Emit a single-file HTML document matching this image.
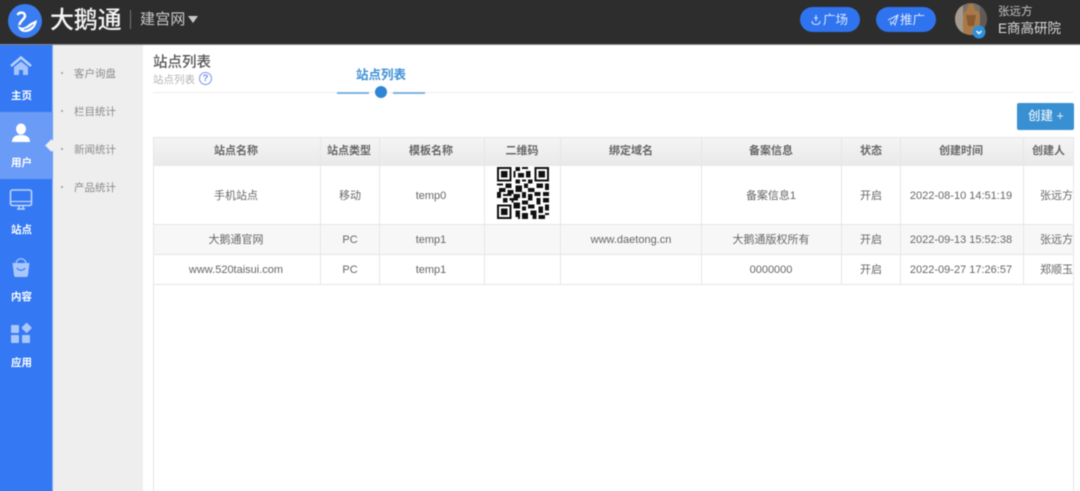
<!DOCTYPE html>
<html lang="zh">
<head>
<meta charset="utf-8">
<style>
html,body{margin:0;padding:0;width:1080px;height:491px;overflow:hidden;background:#fff}
body{font-family:"Liberation Sans","Noto Sans CJK SC",sans-serif;position:relative}
#w{position:absolute;left:0;top:0;width:1080px;height:491px;filter:blur(.5px)}
.a{position:absolute;white-space:nowrap}
.c{position:absolute;white-space:nowrap;text-align:center;transform:translateX(-50%)}
.nav{color:#fff;font-size:10.5px;font-weight:700;line-height:14px;width:43px;left:0;text-align:center;position:absolute}
.sub{position:absolute;left:74px;font-size:10.5px;color:#8a8a8a;line-height:14px}
.dot{position:absolute;left:61px;width:2px;height:2px;background:#999;border-radius:50%}
.h{position:absolute;background:#e6e6e6}
.th{font-size:11px;font-weight:700;color:#666;line-height:14px;top:144px}
.td{font-size:11px;color:#666;line-height:14px}
</style>
</head>
<body>
<div id="w">
<!-- top bar -->
<div class="a" style="left:-6px;top:-6px;width:1092px;height:50px;background:#2d2d2d"></div>
<div class="a" style="left:-6px;top:44px;width:1092px;height:1px;background:#888"></div>
<svg class="a" style="left:8px;top:4px" width="34" height="34" viewBox="0 0 34 34">
<circle cx="17" cy="17" r="17" fill="#3a7df0"/>
<path d="M9.500 11 C11.500 7.500 17 8 17 12 C17 15 11.500 17 11.500 21" stroke="#fff" stroke-width="2.500" fill="none"/>
<path d="M10 21 C12 25 17 24 20 21 C22 19 25 18 29 16 C28 23 24 28 17 28 C13 28 10 25 10 21Z" fill="#fff"/>
<path d="M16 25.500 C20 25 23 23 25.500 20.500" stroke="#3a7df0" stroke-width="1" fill="none"/>
</svg>
<div class="a" style="left:50px;top:5px;font-size:24px;line-height:32px;color:#f4f4f4;font-weight:500;letter-spacing:-.2px">大鹅通</div>
<div class="a" style="left:130px;top:10px;width:1px;height:19px;background:#777"></div>
<div class="a" style="left:140px;top:10px;font-size:15px;line-height:20px;color:#c9c9c9;letter-spacing:.2px">建宫网</div>
<div class="a" style="left:188px;top:16px;width:0;height:0;border-left:5px solid transparent;border-right:5px solid transparent;border-top:7px solid #c9c9c9"></div>

<div class="a" style="left:800px;top:7px;width:60px;height:25px;border-radius:13px;background:#2f74ee"></div>
<svg class="a" style="left:810px;top:14px" width="12" height="12" viewBox="0 0 12 12"><path d="M6 1 V7 M2 7 C2 10 4 10.500 6 10.500 C8 10.500 10 10 10 7 M4 4 H8" stroke="#cfe0ff" stroke-width="1.100" fill="none"/></svg>
<div class="a" style="left:823px;top:12px;font-size:12.500px;line-height:16px;color:#dce8ff">广场</div>
<div class="a" style="left:876px;top:7px;width:60px;height:25px;border-radius:13px;background:#2f74ee"></div>
<svg class="a" style="left:887px;top:14px" width="12" height="12" viewBox="0 0 12 12"><path d="M1 6 L11 1 L8 11 L6 8 L11 1 M6 8 L4 10.500 L3.500 7" stroke="#cfe0ff" stroke-width="1" fill="none"/></svg>
<div class="a" style="left:900px;top:12px;font-size:12.500px;line-height:16px;color:#dce8ff">推广</div>

<svg class="a" style="left:955px;top:2px" width="34" height="38" viewBox="0 0 34 38">
<defs><clipPath id="av"><circle cx="16" cy="17" r="16"/></clipPath></defs>
<circle cx="16" cy="17" r="16" fill="#7a6f64"/>
<g clip-path="url(#av)">
<rect x="0" y="0" width="8" height="34" fill="#a39b92"/>
<rect x="25" y="0" width="8" height="34" fill="#5f5a55"/>
<path d="M13 4 C13 1 19 1 19 4 L20 8 C24 9 25 12 25 16 L24 34 H8 L8 16 C8 12 9 9 12 8Z" fill="#a97a48"/>
<path d="M11 13 H21 L19 24 H13Z" fill="#8a5b30"/>
</g>
<circle cx="24" cy="30" r="6.500" fill="#2f8fdc"/>
<path d="M21.500 29 L24 31.500 L26.500 29" stroke="#fff" stroke-width="1.400" fill="none"/>
</svg>
<div class="a" style="left:998px;top:5px;font-size:11.500px;line-height:15px;color:#c4c4c4">张远方</div>
<div class="a" style="left:998px;top:20px;font-size:13.500px;line-height:18px;color:#d8d8d8">E商高研院</div>

<!-- sub nav -->
<div class="a" style="left:53px;top:45px;width:90px;height:452px;background:#eeeeee"></div>
<div class="dot" style="top:72px"></div><div class="sub" style="top:66.500px">客户询盘</div>
<div class="dot" style="top:110px"></div><div class="sub" style="top:104.500px">栏目统计</div>
<div class="dot" style="top:148px"></div><div class="sub" style="top:142.500px">新闻统计</div>
<div class="dot" style="top:186px"></div><div class="sub" style="top:180.500px">产品统计</div>

<!-- sidebar -->
<div class="a" style="left:-6px;top:45px;width:58px;height:452px;background:#3478f4"></div>
<div class="a" style="left:52px;top:45px;width:1px;height:452px;background:#7ea8f4"></div>
<div class="a" style="left:-6px;top:112px;width:59px;height:67px;background:#6a9bf7"></div>
<div class="a" style="left:47px;top:141px;width:9px;height:9px;background:#eee;transform:rotate(45deg)"></div>

<svg class="a" style="left:10px;top:56px" width="22" height="20" viewBox="0 0 22 20">
<path d="M1 10 L11 1.500 L21 10" stroke="#b9d2fb" stroke-width="2.500" fill="none"/>
<path d="M4 11 L11 5.500 L18 11 V19 H13 V14 H9 V19 H4Z" fill="#a4c4fa"/>
</svg>
<div class="nav" style="top:88.500px">主页</div>

<svg class="a" style="left:11px;top:123px" width="20" height="20" viewBox="0 0 20 20">
<ellipse cx="10" cy="6" rx="5" ry="5.500" fill="#fff"/>
<path d="M1 19 C1 13 6 12 10 12 C14 12 19 13 19 19Z" fill="#fff"/>
</svg>
<div class="nav" style="top:155.500px">用户</div>

<svg class="a" style="left:9px;top:188px" width="24" height="24" viewBox="0 0 24 24">
<rect x="1.500" y="2" width="21" height="15.500" rx="2" stroke="#bcd3fb" stroke-width="1.600" fill="none"/>
<path d="M2 13.500 H22" stroke="#bcd3fb" stroke-width="1.200"/>
<path d="M8 21 H16 M10 18 V21 M14 18 V21" stroke="#bcd3fb" stroke-width="1.600"/>
</svg>
<div class="nav" style="top:222.500px">站点</div>

<svg class="a" style="left:11px;top:256px" width="20" height="22" viewBox="0 0 20 22">
<path d="M5 8 C5 1 15 1 15 8" stroke="#a9c7fa" stroke-width="1.300" fill="none"/>
<path d="M1.500 7 H18.500 L17 19 C17 20.500 16 21 15 21 H5 C4 21 3 20.500 3 19Z" fill="#a9c7fa"/>
<path d="M6 12 C7.500 15 12.500 15 14 12" stroke="#3478f4" stroke-width="1.200" fill="none"/>
</svg>
<div class="nav" style="top:289.500px">内容</div>

<svg class="a" style="left:10px;top:323px" width="23" height="21" viewBox="0 0 23 21">
<rect x="1" y="2" width="8" height="8" rx="1" fill="#a9c7fa"/>
<rect x="12.700" y="1" width="7.600" height="7.600" rx="1" fill="#a9c7fa" transform="rotate(45 16.500 5)"/>
<rect x="1" y="12" width="8" height="8" rx="1" fill="#a9c7fa"/>
<rect x="12" y="12" width="8" height="8" rx="1" fill="#a9c7fa"/>
</svg>
<div class="nav" style="top:355.500px">应用</div>

<!-- heading -->
<div class="a" style="left:153px;top:52.500px;font-size:14.500px;line-height:20px;color:#555;font-weight:500">站点列表</div>
<div class="a" style="left:153px;top:73px;font-size:10.500px;line-height:14px;color:#b4b4b4">站点列表</div>
<div class="a" style="left:199px;top:72px;width:11px;height:11px;border:1.500px solid #7c93e8;border-radius:50%;color:#6f88e6;font-size:9.500px;line-height:11px;text-align:center;font-weight:700">?</div>
<div class="a" style="left:153px;top:92px;width:921px;height:1px;background:#ececec"></div>
<div class="a" style="left:356px;top:67px;font-size:12.500px;line-height:16px;color:#3d8fd6;font-weight:700">站点列表</div>
<div class="a" style="left:337px;top:92px;width:32px;height:1.500px;background:#7fb3e3"></div>
<div class="a" style="left:393px;top:92px;width:32px;height:1.500px;background:#7fb3e3"></div>
<div class="a" style="left:375px;top:86px;width:12px;height:12px;background:#2f86d4;border-radius:50%"></div>

<div class="a" style="left:1017px;top:103px;width:57px;height:27px;background:#388fd2;border-radius:2px"></div>
<div class="a" style="left:1028px;top:108px;font-size:12.500px;line-height:17px;color:#e6f1fa;font-weight:500">创建 +</div>

<!-- table -->
<div class="a" style="left:153px;top:137px;width:921px;height:29px;background:linear-gradient(#f5f5f5,#e9e9e9)"></div>
<div class="a" style="left:153px;top:224px;width:921px;height:30px;background:#f7f7f7"></div>
<div class="h" style="left:153px;top:137px;width:921px;height:1px"></div>
<div class="h" style="left:153px;top:224px;width:921px;height:1px"></div>
<div class="h" style="left:153px;top:254px;width:921px;height:1px"></div>
<div class="h" style="left:153px;top:284px;width:921px;height:1px"></div>
<div class="h" style="left:153px;top:137px;width:1px;height:360px"></div>
<div class="h" style="left:320px;top:137px;width:1px;height:147px"></div>
<div class="h" style="left:379px;top:137px;width:1px;height:147px"></div>
<div class="h" style="left:484px;top:137px;width:1px;height:147px"></div>
<div class="h" style="left:560px;top:137px;width:1px;height:147px"></div>
<div class="h" style="left:701px;top:137px;width:1px;height:147px"></div>
<div class="h" style="left:841px;top:137px;width:1px;height:147px"></div>
<div class="h" style="left:900px;top:137px;width:1px;height:147px"></div>
<div class="h" style="left:1023px;top:137px;width:1px;height:147px"></div>
<div class="h" style="left:1073px;top:137px;width:1px;height:360px"></div>

<div class="c th" style="left:236px">站点名称</div>
<div class="c th" style="left:349px">站点类型</div>
<div class="c th" style="left:431px">模板名称</div>
<div class="c th" style="left:522px">二维码</div>
<div class="c th" style="left:631px">绑定域名</div>
<div class="c th" style="left:771px">备案信息</div>
<div class="c th" style="left:871px">状态</div>
<div class="c th" style="left:961px">创建时间</div>
<div class="a th" style="left:1032px;width:41px;overflow:hidden">创建人</div>

<div class="c td" style="left:236px;top:189px">手机站点</div>
<div class="c td" style="left:350px;top:189px">移动</div>
<div class="c td" style="left:431px;top:189px">temp0</div>
<div class="c td" style="left:771px;top:189px">备案信息1</div>
<div class="c td" style="left:871px;top:189px">开启</div>
<div class="c td" style="left:961px;top:189px">2022-08-10 14:51:19</div>
<div class="a td" style="left:1040px;top:189px;width:33px;overflow:hidden">张远方</div>

<div class="c td" style="left:236px;top:233px">大鹅通官网</div>
<div class="c td" style="left:350px;top:233px">PC</div>
<div class="c td" style="left:431px;top:233px">temp1</div>
<div class="c td" style="left:631px;top:233px">www.daetong.cn</div>
<div class="c td" style="left:771px;top:233px">大鹅通版权所有</div>
<div class="c td" style="left:871px;top:233px">开启</div>
<div class="c td" style="left:961px;top:233px">2022-09-13 15:52:38</div>
<div class="a td" style="left:1040px;top:233px;width:33px;overflow:hidden">张远方</div>

<div class="c td" style="left:236px;top:263px">www.520taisui.com</div>
<div class="c td" style="left:350px;top:263px">PC</div>
<div class="c td" style="left:431px;top:263px">temp1</div>
<div class="c td" style="left:771px;top:263px">0000000</div>
<div class="c td" style="left:871px;top:263px">开启</div>
<div class="c td" style="left:961px;top:263px">2022-09-27 17:26:57</div>
<div class="a td" style="left:1040px;top:263px;width:33px;overflow:hidden">郑顺玉</div>

<!-- QR -->
<svg class="a" style="left:497px;top:167px" width="52" height="52" viewBox="0 0 25 25" shape-rendering="crispEdges">
<path fill="#111" d="M0 0h7v7h-7zM1 1v5h5v-5zM2 2h3v3h-3z M18 0h7v7h-7zM19 1v5h5v-5zM20 2h3v3h-3z M0 18h7v7h-7zM1 19v5h5v-5zM2 20h3v3h-3z" fill-rule="evenodd"/>
<path fill="#111" d="M9 0h2v2h-2zM12 0h3v1h-3zM8 2h1v3h-1zM10 3h3v2h-3zM14 2h2v3h-2zM9 6h2v2h-2zM12 6h2v1h-2zM15 6h2v2h-2zM13 8h2v2h-2zM0 8h3v1h-3zM4 8h3v2h-3zM1 10h3v2h-3zM0 12h2v3h-2zM3 13h4v1h-4zM5 11h3v2h-3zM9 9h3v3h-3zM8 13h3v2h-3zM3 15h2v2h-2zM6 15h4v1h-4zM12 12h2v3h-2zM15 10h3v2h-3zM19 8h3v2h-3zM23 8h2v3h-2zM18 12h3v2h-3zM22 12h3v2h-3zM15 13h2v3h-2zM19 15h2v3h-2zM22 15h3v2h-3zM12 16h3v2h-3zM8 17h3v3h-3zM12 19h2v2h-2zM15 18h3v2h-3zM16 21h3v2h-3zM20 19h2v3h-2zM23 18h2v3h-2zM9 21h2v3h-2zM12 22h3v3h-3zM20 23h3v2h-3zM23 22h2v1h-2zM7 16h1v1h-1zM10 22h1v3h-1zM17 23h2v2h-2z"/>
</svg>
</div>
</body>
</html>
